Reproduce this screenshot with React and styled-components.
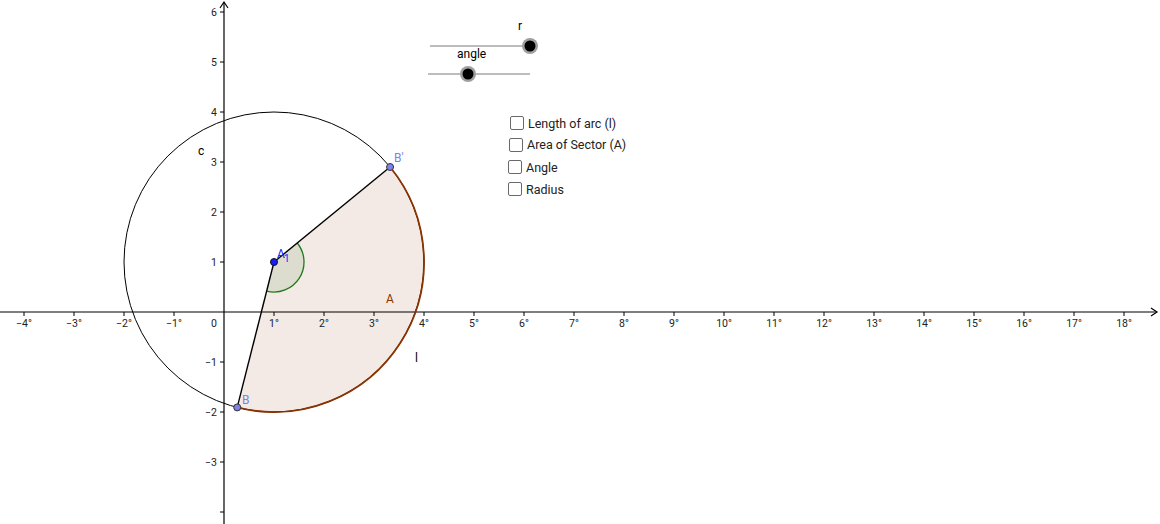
import React from 'react'
import styled, { createGlobalStyle } from 'styled-components'

const GlobalStyle = createGlobalStyle`
  html, body { margin: 0; padding: 0; background: #fff; }
  body { font-family: Roboto, "Liberation Sans", sans-serif; }
`

const Canvas = styled.div`
  position: relative;
  width: 1160px;
  height: 524px;
  overflow: hidden;
  background: #fff;
`

const Board = styled.svg`
  display: block;
  width: 1160px;
  height: 524px;
  font-family: Roboto, "Liberation Sans", sans-serif;
`

const CheckList = styled.div`
  position: absolute;
  left: 508px;
  top: 113px;
  display: flex;
  flex-direction: column;
`

const CheckRow = styled.label`
  display: flex;
  align-items: center;
  gap: 4px;
  height: ${(p) => p.h}px;
  margin-left: ${(p) => p.shift}px;
  font-size: 12.5px;
  color: #222;
`

const Box = styled.span`
  width: 12px;
  height: 12px;
  border: 1px solid #6a6a6a;
  border-radius: 2px;
  background: #fff;
`

// math coords -> screen
const ox = 224
const oy = 312
const u = 50
const sx = (x) => ox + x * u
const sy = (y) => oy - y * u

const rad = (d) => (d * Math.PI) / 180
const polar = (r, deg) => [274 + r * Math.cos(rad(deg)), 262 - r * Math.sin(rad(deg))]

const a0 = -104.2
const a1 = 39.3
const [bx, by] = polar(150, a0)
const [bpx, bpy] = polar(150, a1)
const [mx0, my0] = polar(30, a0)
const [mx1, my1] = polar(30, a1)

const xs = []
for (let k = -4; k <= 18; k++) if (k !== 0) xs.push(k)
const ys = []
for (let k = -4; k <= 6; k++) if (k !== 0) ys.push(k)

const fmt = (k) => (k < 0 ? '\u2212' + -k : String(k))

const checks = [
  { text: 'Length of arc (l)', h: 20, shift: 2 },
  { text: 'Area of Sector (A)', h: 23, shift: 1 },
  { text: 'Angle', h: 22, shift: 0 },
  { text: 'Radius', h: 22, shift: 0 },
]

const Slider = ({ x1, x2, y, knob, label, lx }) => (
  <g>
    <line x1={x1} y1={y} x2={x2} y2={y} stroke="#7a7a7a" strokeWidth="1" />
    <circle cx={knob} cy={y} r="8" fill="#a0a0a0" />
    <circle cx={knob} cy={y} r="5.5" fill="#000" />
    <text x={lx} y={y - 16} fontSize="12" fill="#000">{label}</text>
  </g>
)

export default function App() {
  return (
    <Canvas>
      <GlobalStyle />
      <Board viewBox="0 0 1160 524">
        {/* sector */}
        <path
          d={`M274 262 L${bx} ${by} A150 150 0 0 0 ${bpx} ${bpy} Z`}
          fill="#f4eae5"
        />
        {/* angle mark */}
        <path
          d={`M274 262 L${mx0} ${my0} A30 30 0 0 0 ${mx1} ${my1} Z`}
          fill="#dcdccf"
        />
        <path d={`M${mx0} ${my0} A30 30 0 0 0 ${mx1} ${my1}`} fill="none" stroke="#1f7a1f" strokeWidth="1.3" />

        {/* axes */}
        <line x1="0" y1={oy} x2="1157" y2={oy} stroke="#000" strokeWidth="1.2" />
        <polyline points="1151,308 1157,312 1151,316" fill="none" stroke="#000" strokeWidth="1.2" />
        <line x1={ox} y1="524" x2={ox} y2="2" stroke="#000" strokeWidth="1.2" />
        <polyline points="220,8 224,2 228,8" fill="none" stroke="#000" strokeWidth="1.2" />

        {xs.map((k) => (
          <g key={'x' + k}>
            <line x1={sx(k)} y1={oy} x2={sx(k)} y2={oy + 4} stroke="#000" />
            <text x={sx(k)} y={oy + 15} fontSize="10.5" textAnchor="middle" fill="#222">
              {fmt(k)}°
            </text>
          </g>
        ))}
        <text x="214" y={oy + 15} fontSize="10.5" textAnchor="middle" fill="#222">0</text>
        {ys.map((k) => (
          <g key={'y' + k}>
            <line x1={ox - 4} y1={sy(k)} x2={ox} y2={sy(k)} stroke="#000" />
            {k !== -4 && (
              <text x={ox - 7} y={sy(k) + 4} fontSize="10.5" textAnchor="end" fill="#222">
                {fmt(k)}
              </text>
            )}
          </g>
        ))}

        {/* circle */}
        <circle cx="274" cy="262" r="150" fill="none" stroke="#000" strokeWidth="1" />
        {/* arc l */}
        <path d={`M${bx} ${by} A150 150 0 0 0 ${bpx} ${bpy}`} fill="none" stroke="#8a3300" strokeWidth="1.8" />
        {/* radii */}
        <line x1="274" y1="262" x2={bx} y2={by} stroke="#000" strokeWidth="1.4" />
        <line x1="274" y1="262" x2={bpx} y2={bpy} stroke="#000" strokeWidth="1.4" />

        {/* points */}
        <circle cx="274" cy="262" r="3.5" fill="#1a1aff" stroke="#111" strokeWidth="1" />
        <circle cx={bx} cy={by} r="3.5" fill="#7f7fef" stroke="#333" strokeWidth="1" />
        <circle cx={bpx} cy={bpy} r="3.5" fill="#7f7fef" stroke="#333" strokeWidth="1" />

        {/* labels */}
        <text x="198" y="155" fontSize="12" fill="#000">c</text>
        <text x="277" y="258" fontSize="12" fill="#2222ff">A</text>
        <text x="284" y="262" fontSize="10" fill="#2222ff">1</text>
        <text x="394" y="162" fontSize="12" fill="#7f7fef">B'</text>
        <text x="242" y="404" fontSize="12" fill="#7f7fef">B</text>
        <text x="386" y="303" fontSize="12" fill="#8a3300">A</text>
        <text x="415" y="362" fontSize="12" fill="#000">l</text>

        {/* sliders */}
        <Slider x1={430} x2={530} y={46} knob={530} label="r" lx={518} />
        <Slider x1={428} x2={530} y={74} knob={468} label="angle" lx={457} />
      </Board>

      <CheckList>
        {checks.map((c) => (
          <CheckRow key={c.text} h={c.h} shift={c.shift}>
            <Box />
            {c.text}
          </CheckRow>
        ))}
      </CheckList>
    </Canvas>
  )
}
